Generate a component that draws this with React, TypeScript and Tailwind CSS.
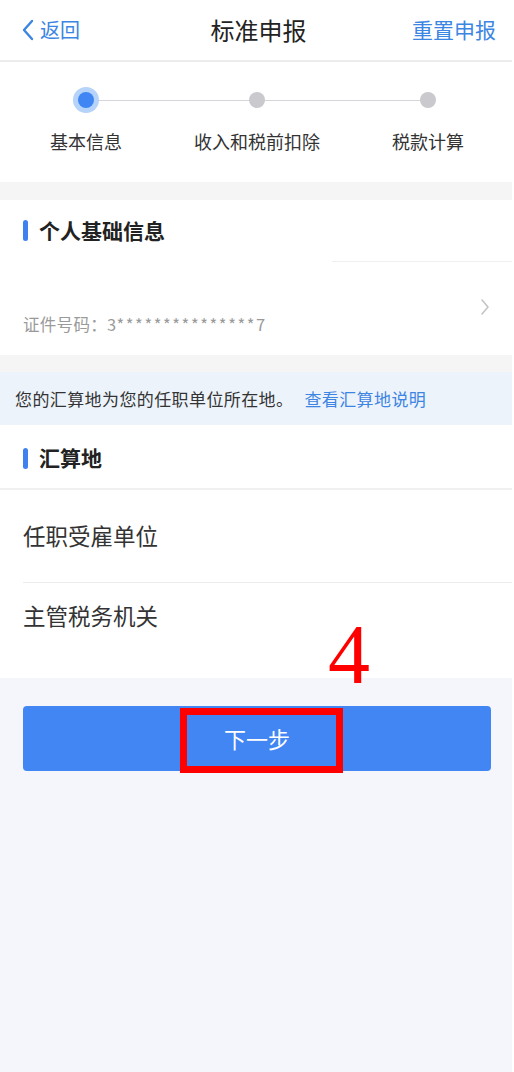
import React from 'react'

const font = { fontFamily: '"Noto Sans CJK SC", "Noto Sans", sans-serif' }

const steps = [
  { label: '基本信息', active: true },
  { label: '收入和税前扣除', active: false },
  { label: '税款计算', active: false },
]

const SectionTitle = ({ text, h }: { text: string; h: string }) => (
  <div className={'flex items-center pl-[23px] ' + h}>
    <div className="w-[5px] h-[21px] rounded-full bg-[#3f82ef]" />
    <span className="ml-[11px] text-[21px] font-bold text-[#222]">{text}</span>
  </div>
)

export default function App() {
  return (
    <div className="w-[514px] min-h-[1072px] bg-white" style={font}>
      <div className="w-[512px] min-h-[1072px] bg-[#f4f6fb] flex flex-col">
        {/* nav bar */}
        <div className="h-[62px] bg-white flex items-center justify-between pl-[21px] pr-[16px] border-b-2 border-[#ececec]">
          <div className="flex items-center text-[20px] text-[#3d85e2] w-[110px]">
            <svg width="14" height="24" viewBox="0 0 14 24" className="mr-[5px]">
              <path d="M11 3 L3 12 L11 21" fill="none" stroke="#3d85e2" strokeWidth="2.4" strokeLinecap="round" strokeLinejoin="round" />
            </svg>
            返回
          </div>
          <div className="text-[24px] text-[#222]">标准申报</div>
          <div className="text-[21px] text-[#3d85e2] w-[110px] text-right">重置申报</div>
        </div>

        {/* steps */}
        <div className="bg-white h-[120px] relative">
          <div className="absolute left-[86px] right-[84px] top-[38px] h-px bg-[#d6d6da]" />
          <div className="flex pl-[16px] gap-[31px] pt-[25px]">
            {steps.map((s) => (
              <div key={s.label} className="w-[140px] flex flex-col items-center">
                <div className="h-[26px] flex items-center justify-center relative">
                  {s.active ? (
                    <div className="w-[26px] h-[26px] rounded-full bg-[#b6d3fa] flex items-center justify-center">
                      <div className="w-[16px] h-[16px] rounded-full bg-[#3f85f3]" />
                    </div>
                  ) : (
                    <div className="w-[16px] h-[16px] rounded-full bg-[#c9c9ce]" />
                  )}
                </div>
                <div className="mt-[15px] text-[18px] text-[#333] whitespace-nowrap">{s.label}</div>
              </div>
            ))}
          </div>
        </div>

        <div className="h-[18px] bg-[#f5f5f5]" />

        {/* personal info */}
        <div className="bg-white h-[155px]">
          <SectionTitle text="个人基础信息" h="h-[61px]" />
          <div className="h-px bg-[#efefef] ml-[332px]" />
          <div className="flex items-center justify-between pl-[23px] pr-[22px] h-[93px]">
            <span className="text-[16.5px] text-[#9a9a9a] mt-[32px] tracking-[0.3px]">
              证件号码：3<span className="tracking-[1.6px]">***************</span>7
            </span>
            <svg width="10" height="18" viewBox="0 0 10 18" className="-mt-[4px]">
              <path d="M2 2 L8 9 L2 16" fill="none" stroke="#c4c4c4" strokeWidth="1.6" strokeLinecap="round" strokeLinejoin="round" />
            </svg>
          </div>
        </div>

        <div className="h-[17px] bg-[#f5f5f5]" />

        {/* notice */}
        <div className="h-[53px] bg-[#edf3fb] flex items-center pl-[15px] text-[17px] tracking-[0.4px]">
          <span className="text-[#333]">您的汇算地为您的任职单位所在地。</span>
          <span className="text-[#3d85e2] ml-[11px]">查看汇算地说明</span>
        </div>

        {/* tax place */}
        <div className="bg-white">
          <SectionTitle text="汇算地" h="h-[63px] pt-[3px]" />
          <div className="h-[2px] bg-[#f0f0f0]" />
          <div className="h-[92px] flex items-center pl-[23px] text-[22.5px] text-[#333]">任职受雇单位</div>
          <div className="h-px bg-[#ececec] ml-[23px]" />
          <div className="h-[95px] flex items-center pl-[23px] pb-[30px] text-[22.5px] text-[#333]">主管税务机关</div>
        </div>

        {/* button */}
        <div className="pl-[23px] pr-[21px] pt-[28px] relative">
          <div className="h-[65px] rounded-[4px] bg-[#4286f3] flex items-center justify-center text-[22px] text-white">
            下一步
          </div>
          <div className="absolute left-[180px] top-[30px] w-[163px] h-[65px] border-[7px] border-[#ff0000]" />
          <div
            className="absolute left-[328px] -top-[65px] text-[84px] leading-none text-[#ff0000]"
            style={{ fontFamily: '"Liberation Serif", serif' }}
          >
            4
          </div>
        </div>
      </div>
    </div>
  )
}
